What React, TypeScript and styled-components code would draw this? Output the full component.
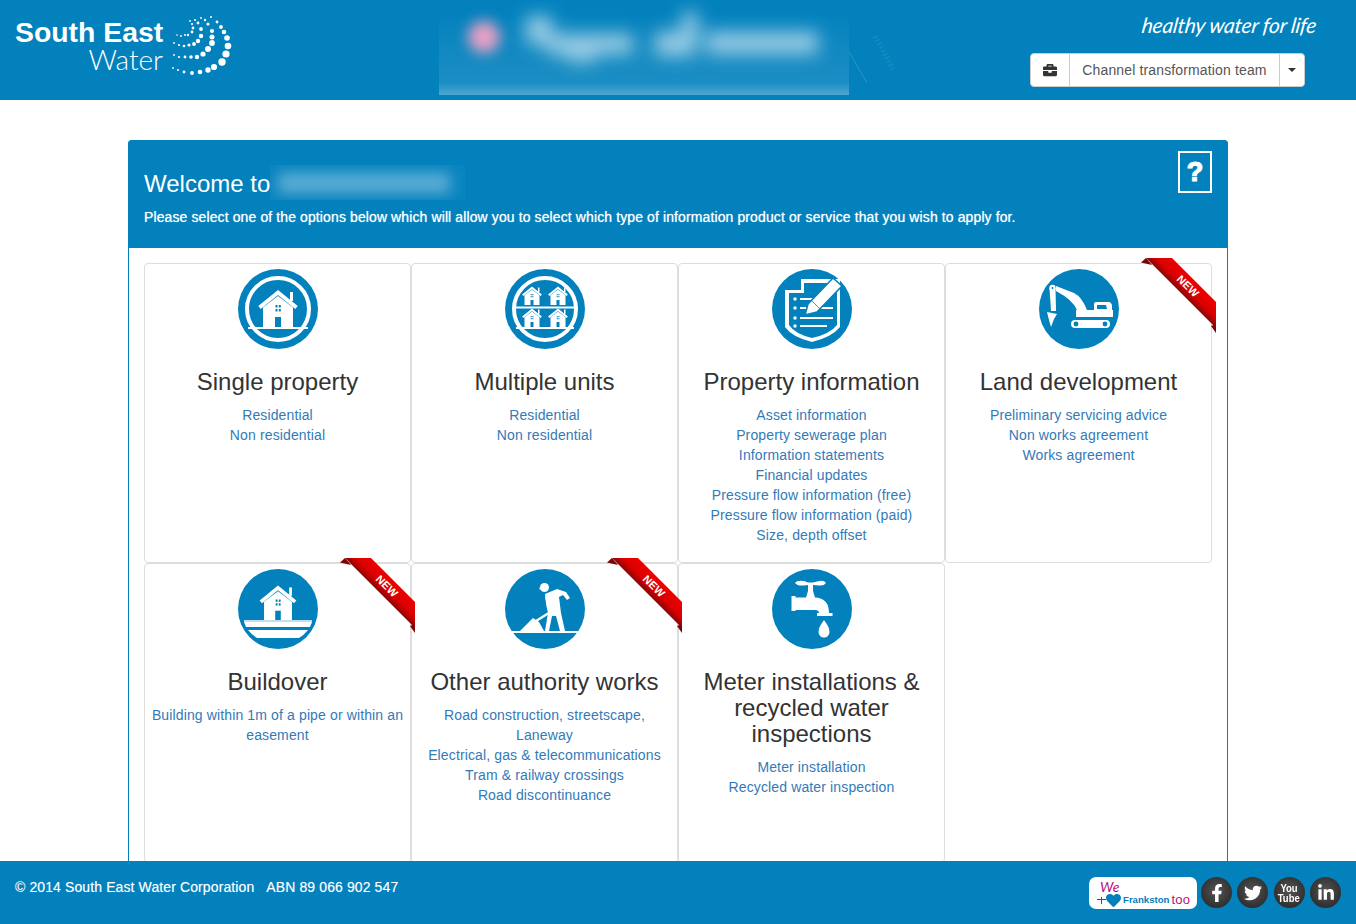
import React from "react";
import styled, { createGlobalStyle } from "styled-components";
import { FaBriefcase, FaFacebookF, FaHeart, FaLinkedinIn, FaTwitter } from "react-icons/fa";

const BLUE = "#0281bd";

const GlobalStyle = createGlobalStyle`
	html, body, #root {
		height: 100%;
		margin: 0;
	}
	body {
		font-family: "Liberation Sans", Arial, sans-serif;
		font-size: 14px;
		line-height: 20px;
		color: #333;
		background: #fff;
		overflow: hidden;
	}
	* {
		box-sizing: border-box;
	}
`;

const Page = styled.div`
	height: 100%;
	display: flex;
	flex-direction: column;
`;

const Header = styled.header`
	flex: none;
	height: 100px;
	background: ${BLUE};
	display: flex;
	padding-left: 15px;
`;

const Logo = styled.div`
	width: 424px;
	display: flex;
	align-items: flex-start;
	padding-top: 16px;
	gap: 8px;
`;

const LogoWords = styled.div`
	width: 148px;
	color: #fff;
	text-align: right;
`;

const LogoBold = styled.div`
	font-size: 28.4px;
	line-height: 32px;
	font-weight: bold;
	white-space: nowrap;
`;

const LogoLight = styled.div`
	font-family: "Lato", "Liberation Sans", sans-serif;
	font-weight: 300;
	font-size: 28px;
	line-height: 22px;
`;

const HeaderRight = styled.div`
	flex: 1;
	display: flex;
	flex-direction: column;
	align-items: flex-end;
	padding: 11px 51px 0 0;
`;

const Tagline = styled.div`
	font-family: "Lato", "Liberation Sans", sans-serif;
	font-style: italic;
	font-size: 21px;
	line-height: 28px;
	letter-spacing: -0.2px;
	color: #fff;
	margin: 0 -12px 14px 0;
	white-space: nowrap;
	transform: skewX(-8deg);
`;

const ButtonGroup = styled.div`
	display: flex;
	height: 34px;
	background: #fff;
	border: 1px solid #ccc;
	border-radius: 4px;
	letter-spacing: 0.14px;
`;

const GroupPart = styled.div<{ $width: number }>`
	width: ${(p) => p.$width}px;
	display: flex;
	align-items: center;
	justify-content: center;
	white-space: nowrap;
	color: #555;
	& + & {
		border-left: 1px solid #ccc;
	}
`;

const Briefcase = styled(FaBriefcase)`
	color: #333;
	font-size: 14px;
`;

const Caret = styled.span`
	width: 0;
	height: 0;
	border-left: 4px solid transparent;
	border-right: 4px solid transparent;
	border-top: 4px solid #333;
`;

const Main = styled.main`
	flex: 1;
	min-height: 0;
	overflow: hidden;
	padding: 40px 128px 0;
`;

const Panel = styled.section`
	border: 1px solid ${BLUE};
	border-radius: 4px;
`;

const PanelHeading = styled.div`
	height: 108px;
	margin: -1px -1px 0;
	background: ${BLUE};
	border-radius: 4px 4px 0 0;
	color: #fff;
	padding: 11px 16px 0;
	display: flex;
	justify-content: space-between;
	align-items: flex-start;
`;

const HeadingText = styled.div`
	padding-top: 14px;
`;

const TitleRow = styled.div`
	display: flex;
	align-items: center;
	height: 35px;
`;

const Welcome = styled.h2`
	margin: 0;
	font-size: 24px;
	font-weight: normal;
	line-height: 26px;
	padding-top: 3px;
`;

const BlurredName = styled.div`
	width: 195px;
	height: 35px;
	overflow: hidden;
	background: rgba(255, 255, 255, 0.03);
	&::before {
		content: "";
		display: block;
		width: 172px;
		height: 20px;
		margin: 8px 0 0 8px;
		background: rgba(255, 255, 255, 0.34);
		filter: blur(7px);
	}
`;

const Intro = styled.p`
	margin: 7px 0 0;
	font-size: 14px;
	line-height: 20px;
	letter-spacing: 0.11px;
	text-shadow: 0 0 1px rgba(255, 255, 255, 0.7);
	white-space: nowrap;
`;

const HelpBox = styled.div`
	width: 34px;
	height: 42px;
	border: 2px solid #fff;
	font-size: 27px;
	font-weight: bold;
	-webkit-text-stroke: 1.2px #fff;
	display: flex;
	align-items: center;
	justify-content: center;
`;

const CardGrid = styled.div`
	display: grid;
	grid-template-columns: repeat(4, 267px);
	grid-auto-rows: 300px;
	padding: 15px;
`;

const Card = styled.article`
	position: relative;
	border: 1px solid #ddd;
	border-radius: 4px;
	padding: 5px 4px 0;
	text-align: center;
`;

const IconWrap = styled.div`
	width: 80px;
	height: 80px;
	margin: 0 auto;
	svg {
		display: block;
	}
`;

const CardTitle = styled.h3`
	margin: 20px 0 10px;
	font-size: 24px;
	font-weight: normal;
	line-height: 26px;
	color: #333;
`;

const CardLink = styled.a`
	display: block;
	color: #337ab7;
	text-decoration: none;
	letter-spacing: 0.13px;
`;

const RibbonWrap = styled.div`
	position: absolute;
	top: -6px;
	right: -5px;
	width: 75px;
	height: 75px;
	z-index: 2;
	svg {
		display: block;
	}
`;

const Footer = styled.footer`
	flex: none;
	height: 63px;
	background: ${BLUE};
	color: #fff;
	display: flex;
	justify-content: space-between;
	padding: 16px 15px 0;
`;

const FooterText = styled.div`
	letter-spacing: 0.11px;
	text-shadow: 0 0 1px rgba(255, 255, 255, 0.4);
	span {
		margin-left: 12px;
	}
`;

const FooterLinks = styled.div`
	display: flex;
	align-items: flex-start;
	gap: 5.33px;
`;

const Badge = styled.div`
	width: 108px;
	height: 32px;
	background: #fff;
	border-radius: 7px;
	padding: 3px 0 0 8px;
	margin-right: -1.33px;
`;

const BadgeWe = styled.div`
	font-family: "Lato", sans-serif;
	font-style: italic;
	font-size: 14px;
	line-height: 14px;
	color: #b5127f;
	padding-left: 3px;
`;

const BadgeRow = styled.div`
	display: flex;
	align-items: center;
	height: 12px;
	line-height: 12px;
	color: #0281bd;
	font-size: 9.6px;
	font-weight: bold;
	white-space: nowrap;
`;

// the pink cross is part of the badge artwork
const BadgePlus = styled.span`
	flex: none;
	width: 9px;
	height: 7px;
	background:
		linear-gradient(#b5127f, #b5127f) center / 9px 1.4px no-repeat,
		linear-gradient(#b5127f, #b5127f) center / 1.4px 7px no-repeat;
`;

const BadgeHeart = styled(FaHeart)`
	font-size: 15px;
	margin-right: 2px;
`;

const BadgeToo = styled.span`
	color: #b5127f;
	font-weight: normal;
	font-size: 13px;
	letter-spacing: 0.3px;
	margin-left: 2px;
`;

const Social = styled.a`
	width: 31px;
	height: 31px;
	border-radius: 50%;
	background: radial-gradient(circle at 50% 45%, #555, #2b2b2b 80%);
	color: #fff;
	font-size: 18px;
	display: flex;
	align-items: center;
	justify-content: center;
`;

const YouTube = styled(Social)`
	flex-direction: column;
	font-size: 11px;
	line-height: 10px;
	font-weight: bold;
	span {
		display: block;
		transform: scaleX(0.86);
	}
`;

// dots of the logo swirl: x, y, radius
const swirl: [number, number, number][] = [
	[172, 68, 0.9], [177, 70, 1.1], [183, 72, 1.4], [191, 73, 1.9], [199, 72, 2.3], [207, 70, 2.7], [213, 67, 3.1],
	[221, 62, 3.7], [225, 54, 3.6], [227, 46, 3.3], [226, 38, 2.8], [223, 32, 2.3], [220, 27, 1.9], [216, 22, 1.4], [210, 17, 1],
	[173, 55, 0.9], [178, 57, 1.1], [184, 57, 1.4], [190, 57, 1.8], [196, 57, 2.2], [202, 54, 2.6], [207, 49, 3],
	[211, 43, 2.9], [211, 37, 2.5], [211, 31, 2.1], [207, 24, 1.6], [204, 20, 1.2], [200, 18, 0.9],
	[173, 43, 0.9], [178, 45, 1.1], [183, 46, 1.3], [188, 45, 1.6], [193, 44, 1.9], [197, 41, 2.2], [200, 36, 2.2],
	[200, 29, 1.9], [197, 23, 1.4], [194, 20, 1],
	[176, 35, 0.8], [180, 36, 0.9], [184, 35, 1], [187, 35, 1.2], [191, 32, 1.4], [192, 28, 1.4], [191, 24, 1.1], [189, 21, 0.9],
];

const LogoSwirl = () => (
	<svg width="62" height="62" viewBox="170 15 62 62" style={{ marginTop: -1 }}>
		{swirl.map(([x, y, r], i) => (
			<circle key={i} cx={x} cy={y} r={r} fill="#fff" />
		))}
	</svg>
);

// the blurred out product banner in the header
const Banner = () => (
	<svg width="461" height="100" viewBox="439 0 461 100">
		<defs>
			<filter id="soft" x="-60%" y="-150%" width="220%" height="400%">
				<feGaussianBlur stdDeviation="9" />
			</filter>
			<filter id="dot" x="-100%" y="-100%" width="300%" height="300%">
				<feGaussianBlur stdDeviation="7" />
			</filter>
			<linearGradient id="bannerFade" x1="0" y1="0" x2="0" y2="1">
				<stop offset="0" stopColor="#fff" stopOpacity="0" />
				<stop offset="0.55" stopColor="#fff" stopOpacity="0.07" />
				<stop offset="0.85" stopColor="#fff" stopOpacity="0.1" />
				<stop offset="1" stopColor="#fff" stopOpacity="0.3" />
			</linearGradient>
		</defs>
		<rect x="439" y="12" width="410" height="83" fill="url(#bannerFade)" />
		<circle cx="484" cy="37" r="16" fill="#e8a0c6" filter="url(#dot)" />
		<g fill="#cfe6f2" filter="url(#soft)" opacity="0.72">
			<rect x="526" y="16" width="26" height="28" />
			<rect x="545" y="34" width="88" height="20" />
			<rect x="566" y="48" width="30" height="14" />
			<rect x="655" y="32" width="40" height="24" />
			<rect x="682" y="12" width="16" height="32" />
			<rect x="706" y="32" width="112" height="22" />
		</g>
		<path d="M849 52 L867 83" stroke="#5aa8d2" strokeWidth="1" fill="none" opacity="0.5" />
		<path d="M875 36 L893 69" stroke="#3d98c8" strokeWidth="5" strokeDasharray="2 2" fill="none" opacity="0.35" />
	</svg>
);

const Disc = ({ children }: { children: React.ReactNode }) => (
	<svg width="80" height="80" viewBox="0 0 80 80">
		<circle cx="40" cy="40" r="40" fill={BLUE} />
		{children}
	</svg>
);

const House = ({ x = 0, y = 0, scale = 1 }: { x?: number; y?: number; scale?: number }) => (
	<g transform={`translate(${x} ${y}) scale(${scale})`}>
		<rect x="52" y="23" width="3" height="9" fill="#fff" />
		<path d="M21.5 38.5 L40 23.5 L58.5 38.5" stroke="#fff" strokeWidth="4" fill="none" />
		<path d="M25 38.5 L40 27 L55 38.5 V58 H25 Z" fill="#fff" />
		<rect x="37" y="48" width="6" height="10" fill={BLUE} />
		<g fill={BLUE}>
			<rect x="37.5" y="36" width="2" height="2.5" />
			<rect x="40.8" y="36" width="2" height="2.5" />
			<rect x="37.5" y="40" width="2" height="2.5" />
			<rect x="40.8" y="40" width="2" height="2.5" />
		</g>
	</g>
);

const Ring = () => <circle cx="40" cy="40" r="31" fill="none" stroke="#fff" strokeWidth="4" />;

const SingleIcon = () => (
	<Disc>
		<Ring />
		<House />
		<rect x="10" y="58" width="60" height="2" fill="#fff" />
	</Disc>
);

const MultipleIcon = () => (
	<Disc>
		<Ring />
		<rect x="9" y="37.5" width="62" height="2" fill="#fff" />
		<House x={7} y={7} scale={0.5} />
		<House x={33} y={7} scale={0.5} />
		<House x={7} y={29} scale={0.5} />
		<House x={33} y={29} scale={0.5} />
		<rect x="11" y="58" width="58" height="2" fill="#fff" />
	</Disc>
);

const InfoIcon = () => (
	<Disc>
		<path d="M13 21 H29 V10 H68 V58 Q60 68 40 73 Q20 68 13 58 Z" fill="#fff" />
		<path d="M17 24 H32 V14 H65 V56 Q58 65 40 69 Q23 65 17 56 Z" fill={BLUE} />
		<g fill="#fff">
			<circle cx="23" cy="30" r="1.7" />
			<circle cx="23" cy="39" r="1.7" />
			<circle cx="23" cy="49" r="1.7" />
			<circle cx="23" cy="57" r="1.7" />
			<rect x="28" y="29" width="20" height="2" />
			<rect x="28" y="38" width="33" height="2" />
			<rect x="28" y="48" width="33" height="2" />
			<rect x="28" y="56" width="27" height="2" />
		</g>
		<path d="M33 46 L36 35 L61 9 L70 17 L45 43 Z" fill="#fff" stroke={BLUE} strokeWidth="1.6" />
		<path d="M40 32 L48 40" stroke={BLUE} strokeWidth="0.8" />
	</Disc>
);

const ExcavatorIcon = () => (
	<Disc>
		<g fill="#fff">
			<path d="M17 17 L35 24 Q43 28 48 41 L38 41 Q34 31 17 22 Z" />
			<circle cx="13.5" cy="19" r="3.2" />
			<path d="M10.5 19 L16.5 19 L17 42 L12 42 Z" />
			<path d="M8 43 L18 45 L15 50 L12 58 L10 51 Z" />
			<path d="M37 41 H74 V48 H37 Z" />
			<path d="M55 41 V35 Q55 33 57 33 H70 Q72 33 73 36 V41 Z" />
			<rect x="32" y="51" width="39" height="8" rx="4" />
		</g>
		<path d="M58 40 V36 H67 L68 40 Z" fill={BLUE} />
		<circle cx="13.5" cy="19" r="1" fill={BLUE} />
		<circle cx="37" cy="55" r="2.4" fill={BLUE} />
		<circle cx="66" cy="55" r="2.4" fill={BLUE} />
	</Disc>
);

const BuildoverIcon = () => (
	<Disc>
		<House x={2.8} y={-2.94} scale={0.93} />
		<rect x="6" y="51" width="68" height="2" fill="#bfe0f0" />
		<path d="M6 53 H74 L72 58 H8 Z" fill="#fff" />
		<path d="M10 61 H70 Q66 66 61 69 H19 Q14 66 10 61 Z" fill="#fff" />
	</Disc>
);

const WorkerIcon = () => (
	<Disc>
		<g fill="#fff">
			<circle cx="39.5" cy="18.5" r="4.5" />
			<rect x="34.5" y="18.5" width="5" height="2" />
			<path d="M40 25 L52 20 L61 23 L65 29 L62 31 L58 26 L54 28 L56 44 L60 62 L55 62 L51 47 L47 47 L44 62 L40 62 L43 44 L41 35 Z" />
			<path d="M15 62 L28 49 L34 53 L39 62 Z" />
			<rect x="7" y="62" width="66" height="2" />
		</g>
		<path d="M41 28 L46 41 M47 42 L31 52" stroke="#fff" strokeWidth="2.2" fill="none" />
	</Disc>
);

const TapIcon = () => (
	<Disc>
		<g fill="#fff">
			<path d="M23 14 Q25 11 32 12 L36 13.5 H41 L47 12 Q52 11 54 14 Q52 17 47 16.5 L41 16 V22 L43 28.5 Q57 29 57 44 H47 Q47 41 43 41 H23 V28.5 H34 L36 22 V16 L32 16.5 Q25 17 23 14 Z" />
			<rect x="19.5" y="27" width="4" height="15" />
			<rect x="45" y="44" width="15.5" height="3" />
			<path d="M52 51 Q57.5 58 57.5 63 A5.5 5.5 0 0 1 46.5 63 Q46.5 58 52 51 Z" />
		</g>
	</Disc>
);

const Ribbon = ({ id }: { id: string }) => (
	<RibbonWrap>
		<svg width="75" height="75" viewBox="0 0 75 75">
			<defs>
				<linearGradient id={id} gradientUnits="userSpaceOnUse" x1="53" y1="22" x2="40" y2="35">
					<stop offset="0" stopColor="#ec0000" />
					<stop offset="0.6" stopColor="#dc0000" />
					<stop offset="1" stopColor="#8a0505" />
				</linearGradient>
			</defs>
			<path d="M0 4.5 L5 0 L11 7 Z" fill="#7c0404" />
			<path d="M70 68 L75 66 L75 75 Z" fill="#7c0404" />
			<path d="M5 0 H31 L75 44 V70 Z" fill={`url(#${id})`} />
			<text
				x="47"
				y="32"
				transform="rotate(45 47 28)"
				textAnchor="middle"
				fontFamily="Liberation Sans, sans-serif"
				fontWeight="bold"
				fontSize="11"
				fill="#fff"
			>
				NEW
			</text>
		</svg>
	</RibbonWrap>
);

interface CardData {
	title: string;
	icon: React.ReactNode;
	links: string[];
	isNew?: boolean;
}

const cards: CardData[] = [
	{ title: "Single property", icon: <SingleIcon />, links: ["Residential", "Non residential"] },
	{ title: "Multiple units", icon: <MultipleIcon />, links: ["Residential", "Non residential"] },
	{
		title: "Property information",
		icon: <InfoIcon />,
		links: [
			"Asset information",
			"Property sewerage plan",
			"Information statements",
			"Financial updates",
			"Pressure flow information (free)",
			"Pressure flow information (paid)",
			"Size, depth offset",
		],
	},
	{
		title: "Land development",
		icon: <ExcavatorIcon />,
		links: ["Preliminary servicing advice", "Non works agreement", "Works agreement"],
		isNew: true,
	},
	{
		title: "Buildover",
		icon: <BuildoverIcon />,
		links: ["Building within 1m of a pipe or within an easement"],
		isNew: true,
	},
	{
		title: "Other authority works",
		icon: <WorkerIcon />,
		links: [
			"Road construction, streetscape, Laneway",
			"Electrical, gas & telecommunications",
			"Tram & railway crossings",
			"Road discontinuance",
		],
		isNew: true,
	},
	{
		title: "Meter installations & recycled water inspections",
		icon: <TapIcon />,
		links: ["Meter installation", "Recycled water inspection"],
	},
];

const App: React.FC = () => {
	return (
		<Page>
			<GlobalStyle />
			<Header>
				<Logo>
					<LogoWords>
						<LogoBold>South East</LogoBold>
						<LogoLight>Water</LogoLight>
					</LogoWords>
					<LogoSwirl />
				</Logo>
				<Banner />
				<HeaderRight>
					<Tagline>healthy water for life</Tagline>
					<ButtonGroup>
						<GroupPart $width={38}>
							<Briefcase />
						</GroupPart>
						<GroupPart $width={210}>Channel transformation team</GroupPart>
						<GroupPart $width={25}>
							<Caret />
						</GroupPart>
					</ButtonGroup>
				</HeaderRight>
			</Header>
			<Main>
				<Panel>
					<PanelHeading>
						<HeadingText>
							<TitleRow>
								<Welcome>Welcome to</Welcome>
								<BlurredName />
							</TitleRow>
							<Intro>
								Please select one of the options below which will allow you to select which type of
								information product or service that you wish to apply for.
							</Intro>
						</HeadingText>
						<HelpBox>?</HelpBox>
					</PanelHeading>
					<CardGrid>
						{cards.map((card, i) => (
							<Card key={card.title}>
								{card.isNew && <Ribbon id={`ribbon${i}`} />}
								<IconWrap>{card.icon}</IconWrap>
								<CardTitle>{card.title}</CardTitle>
								{card.links.map((link) => (
									<CardLink key={link}>{link}</CardLink>
								))}
							</Card>
						))}
					</CardGrid>
				</Panel>
			</Main>
			<Footer>
				<FooterText>
					© 2014 South East Water Corporation<span>ABN 89 066 902 547</span>
				</FooterText>
				<FooterLinks>
					<Badge>
						<BadgeWe>We</BadgeWe>
						<BadgeRow>
							<BadgePlus />
							<BadgeHeart />
							Frankston
							<BadgeToo>too</BadgeToo>
						</BadgeRow>
					</Badge>
					<Social>
						<FaFacebookF />
					</Social>
					<Social>
						<FaTwitter />
					</Social>
					<YouTube>
						<span>You</span>
						<span>Tube</span>
					</YouTube>
					<Social>
						<FaLinkedinIn />
					</Social>
				</FooterLinks>
			</Footer>
		</Page>
	);
};

export default App;
